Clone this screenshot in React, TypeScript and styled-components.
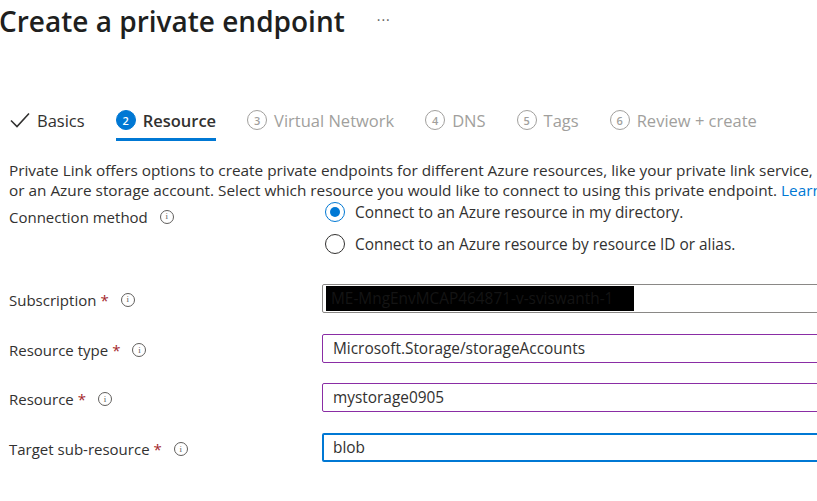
import styled, { createGlobalStyle } from "styled-components";

const GlobalStyle = createGlobalStyle`
  html, body {
    margin: 0;
    padding: 0;
    background: #fff;
  }
  body {
    font-family: "Segoe UI", "Open Sans", "Noto Sans", sans-serif;
    color: #323130;
    overflow: hidden;
  }
`;

const Page = styled.div`
  width: 817px;
  height: 501px;
  overflow: hidden;
  position: relative;
`;

const Header = styled.div`
  display: flex;
  align-items: center;
  height: 42px;
  gap: 32px;
`;

const Title = styled.h1`
  margin: 0 0 0 -1px;
  font-size: 28px;
  font-weight: 600;
  color: #201f1e;
  white-space: nowrap;
`;

const More = styled.span`
  font-size: 14px;
  color: #605e5c;
  letter-spacing: 1px;
  margin-top: -4px;
`;

const Tabs = styled.nav`
  display: flex;
  align-items: stretch;
  margin-top: 57px;
  padding-left: 10px;
  gap: 31px;
  height: 42px;
`;

const Tab = styled.div<{ $active?: boolean; $done?: boolean }>`
  display: flex;
  align-items: center;
  gap: 7px;
  font-size: 16.5px;
  font-weight: ${(p) => (p.$active ? 600 : 400)};
  color: ${(p) => (p.$active || p.$done ? "#323130" : "#a19f9d")};
  border-bottom: 3px solid ${(p) => (p.$active ? "#0078d4" : "transparent")};
  white-space: nowrap;
  padding-top: 3px;
`;

const StepCircle = styled.span<{ $active?: boolean }>`
  display: inline-flex;
  align-items: center;
  justify-content: center;
  width: 20px;
  height: 20px;
  box-sizing: border-box;
  border-radius: 50%;
  font-size: 11px;
  font-weight: 600;
  background: ${(p) => (p.$active ? "#0078d4" : "transparent")};
  color: ${(p) => (p.$active ? "#fff" : "#a19f9d")};
  border: 1px solid ${(p) => (p.$active ? "#0078d4" : "#a19f9d")};
`;

const Description = styled.p`
  margin: 19px 0 0 9px;
  font-size: 15.35px;
  line-height: 20px;
  white-space: nowrap;
`;

const Link = styled.a`
  color: #0078d4;
  text-decoration: none;
`;

const Form = styled.div`
  display: grid;
  grid-template-columns: 313px 1fr;
  padding-left: 9px;
  margin-top: 2px;
`;

const Label = styled.div<{ $top?: number; $drop?: number }>`
  display: flex;
  align-items: center;
  gap: 6px;
  font-size: 15px;
  height: 29px;
  box-sizing: border-box;
  padding-top: ${(p) => p.$drop ?? 0}px;
  margin-top: ${(p) => p.$top ?? 0}px;
  white-space: nowrap;
`;

const Required = styled.span`
  color: #a4262c;
  margin-left: -2px;
`;

const Info = styled.span`
  display: inline-flex;
  align-items: center;
  justify-content: center;
  width: 14px;
  height: 14px;
  box-sizing: border-box;
  border: 1px solid #605e5c;
  border-radius: 50%;
  font-size: 9px;
  line-height: 1;
  color: #605e5c;
  margin-left: 6px;
  font-family: "Liberation Serif", serif;
`;

const RadioGroup = styled.div`
  display: flex;
  flex-direction: column;
  gap: 12px;
`;

const RadioRow = styled.label`
  display: flex;
  align-items: center;
  gap: 10px;
  font-size: 15.4px;
  height: 20px;
  white-space: nowrap;
`;

const RadioCircle = styled.span<{ $checked?: boolean }>`
  width: 20px;
  height: 20px;
  box-sizing: border-box;
  border-radius: 50%;
  border: 1px solid ${(p) => (p.$checked ? "#0078d4" : "#323130")};
  display: flex;
  align-items: center;
  justify-content: center;
  margin-left: 3px;

  &::after {
    content: "";
    width: 10px;
    height: 10px;
    border-radius: 50%;
    background: ${(p) => (p.$checked ? "#0078d4" : "transparent")};
  }
`;

const Field = styled.div<{ $border: string; $width?: number; $top?: number }>`
  box-sizing: border-box;
  height: 29px;
  width: 520px;
  margin-top: ${(p) => p.$top ?? 0}px;
  border: ${(p) => p.$width ?? 1}px solid ${(p) => p.$border};
  border-radius: 2px;
  display: flex;
  align-items: center;
  padding-left: ${(p) => 11 - (p.$width ?? 1)}px;
  font-size: 15.4px;
  color: #323130;
  white-space: nowrap;
`;

const Redacted = styled.span`
  background: #000;
  color: #141414;
  height: 25px;
  width: 308px;
  margin-left: -7px;
  display: flex;
  align-items: center;
  padding-left: 5px;
  box-sizing: border-box;
  font-size: 15.4px;
`;

const Check = () => (
  <svg width="20" height="16" viewBox="0 0 20 16" fill="none">
    <path d="M1 8.5 L7 14.5 L19 1.5" stroke="#323130" strokeWidth="1.6" />
  </svg>
);

const steps = [
  { n: 3, label: "Virtual Network" },
  { n: 4, label: "DNS" },
  { n: 5, label: "Tags" },
  { n: 6, label: "Review + create" },
];

export default function App() {
  return (
    <Page>
      <GlobalStyle />
      <Header>
        <Title>Create a private endpoint</Title>
        <More>···</More>
      </Header>
      <Tabs>
        <Tab $done>
          <Check />
          Basics
        </Tab>
        <Tab $active>
          <StepCircle $active>2</StepCircle>
          Resource
        </Tab>
        {steps.map((s) => (
          <Tab key={s.n}>
            <StepCircle>{s.n}</StepCircle>
            {s.label}
          </Tab>
        ))}
      </Tabs>
      <Description>
        Private Link offers options to create private endpoints for different Azure resources, like your private link service, a
        <br />
        or an Azure storage account. Select which resource you would like to connect to using this private endpoint.{" "}
        <Link>Learn more</Link>
      </Description>
      <Form>
        <Label>
          Connection method <Info>i</Info>
        </Label>
        <RadioGroup>
          <RadioRow>
            <RadioCircle $checked />
            Connect to an Azure resource in my directory.
          </RadioRow>
          <RadioRow>
            <RadioCircle />
            Connect to an Azure resource by resource ID or alias.
          </RadioRow>
        </RadioGroup>

        <Label $top={30} $drop={2}>
          Subscription <Required>*</Required> <Info>i</Info>
        </Label>
        <Field $border="#8a8886" $top={30}>
          <Redacted>ME-MngEnvMCAP464871-v-sviswanth-1</Redacted>
        </Field>

        <Label $top={21} $drop={3}>
          Resource type <Required>*</Required> <Info>i</Info>
        </Label>
        <Field $border="#8a2da5" $top={21}>
          Microsoft.Storage/storageAccounts
        </Field>

        <Label $top={20} $drop={3}>
          Resource <Required>*</Required> <Info>i</Info>
        </Label>
        <Field $border="#8a2da5" $top={20}>
          mystorage0905
        </Field>

        <Label $top={21} $drop={3}>
          Target sub-resource <Required>*</Required> <Info>i</Info>
        </Label>
        <Field $border="#0078d4" $width={2} $top={21}>
          blob
        </Field>
      </Form>
    </Page>
  );
}
